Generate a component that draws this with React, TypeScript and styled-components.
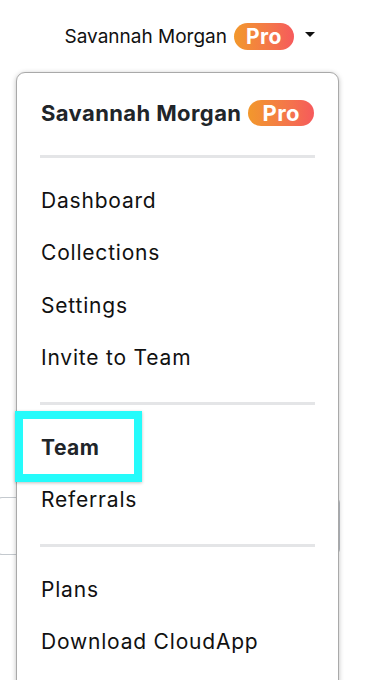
import React from 'react';
import styled, {createGlobalStyle} from 'styled-components';

const GlobalStyle = createGlobalStyle`
  body {
    margin: 0;
    background: #fff;
    font-family: Inter, "Noto Sans", "Liberation Sans", sans-serif;
    color: #212529;
  }
`

const Page = styled.div`
  position: relative;
  width: 390px;
  height: 680px;
  overflow: hidden;
`

const NavBar = styled.div`
  display: flex;
  justify-content: flex-end;
  align-items: center;
  height: 72px;
  padding-right: 75px;
  box-sizing: border-box;
`

const UserToggle = styled.div`
  display: flex;
  align-items: center;
  font-size: 19px;
  color: #111;
`

const Badge = styled.span<{$big?: boolean}>`
  display: inline-flex;
  align-items: center;
  justify-content: center;
  margin-left: 7px;
  height: ${p => (p.$big ? 26 : 27)}px;
  padding: 0 ${p => (p.$big ? 14 : 12)}px;
  border-radius: 14px;
  background: linear-gradient(90deg, #f2982c 0%, #f4764a 60%, #f65a5c 100%);
  color: #fff;
  font-weight: 700;
  font-size: ${p => (p.$big ? 22 : 21)}px;
  letter-spacing: 0.5px;
`

const Caret = styled.span`
  margin-left: 11px;
  width: 0;
  height: 0;
  border-top: 5px solid #111;
  border-left: 5px solid transparent;
  border-right: 5px solid transparent;
  margin-bottom: 4px;
`

const Content = styled.div`
  padding-top: 425px;
`

const SearchBox = styled.div`
  margin-left: -4px;
  width: 344px;
  height: 58px;
  border: 1px solid #c4c9ce;
  border-right: 2px solid #b9bec4;
  border-radius: 6px;
  box-sizing: border-box;
`

const Menu = styled.div`
  position: absolute;
  top: 72px;
  left: 16px;
  width: 323px;
  height: 640px;
  background: #fff;
  border: 1px solid #a9a9a9;
  border-radius: 9px;
  box-shadow: 0 1px 5px rgba(0, 0, 0, 0.25);
  box-sizing: border-box;
  padding-top: 14px;
`

const Item = styled.div<{$bold?: boolean}>`
  display: flex;
  align-items: center;
  height: 52.5px;
  padding-left: 24px;
  font-size: 21px;
  letter-spacing: ${p => (p.$bold ? '0.5px' : '0.8px')};
  font-weight: ${p => (p.$bold ? 700 : 400)};
  color: ${p => (p.$bold ? '#212529' : '#111')};
`

const HeaderItem = styled(Item)`
  height: 52px;
  font-size: 22px;
  letter-spacing: 0.4px;
`

const Divider = styled.div<{$top?: number}>`
  margin: ${p => p.$top ?? 18}px 23px 16px 23px;
  height: 3px;
  background: #e4e5e7;
`

const Highlight = styled.div`
  position: absolute;
  left: -2px;
  top: 338px;
  width: 127px;
  height: 71px;
  border: 8px solid #25fbfb;
  box-sizing: border-box;
  box-shadow: 0 1px 3px rgba(0, 0, 0, 0.25);
`

const App: React.FC = () => {
  return (
    <>
      <GlobalStyle />
      <Page>
        <NavBar>
          <UserToggle>
            Savannah Morgan
            <Badge>Pro</Badge>
            <Caret />
          </UserToggle>
        </NavBar>
        <Content>
          <SearchBox />
        </Content>
        <Menu>
          <HeaderItem $bold>
            Savannah Morgan
            <Badge $big>Pro</Badge>
          </HeaderItem>
          <Divider $top={16} />
          <Item>Dashboard</Item>
          <Item>Collections</Item>
          <Item>Settings</Item>
          <Item>Invite to Team</Item>
          <Divider />
          <Item $bold>Team</Item>
          <Item>Referrals</Item>
          <Divider />
          <Item>Plans</Item>
          <Item>Download CloudApp</Item>
          <Highlight />
        </Menu>
      </Page>
    </>
  )
};

export default App;
